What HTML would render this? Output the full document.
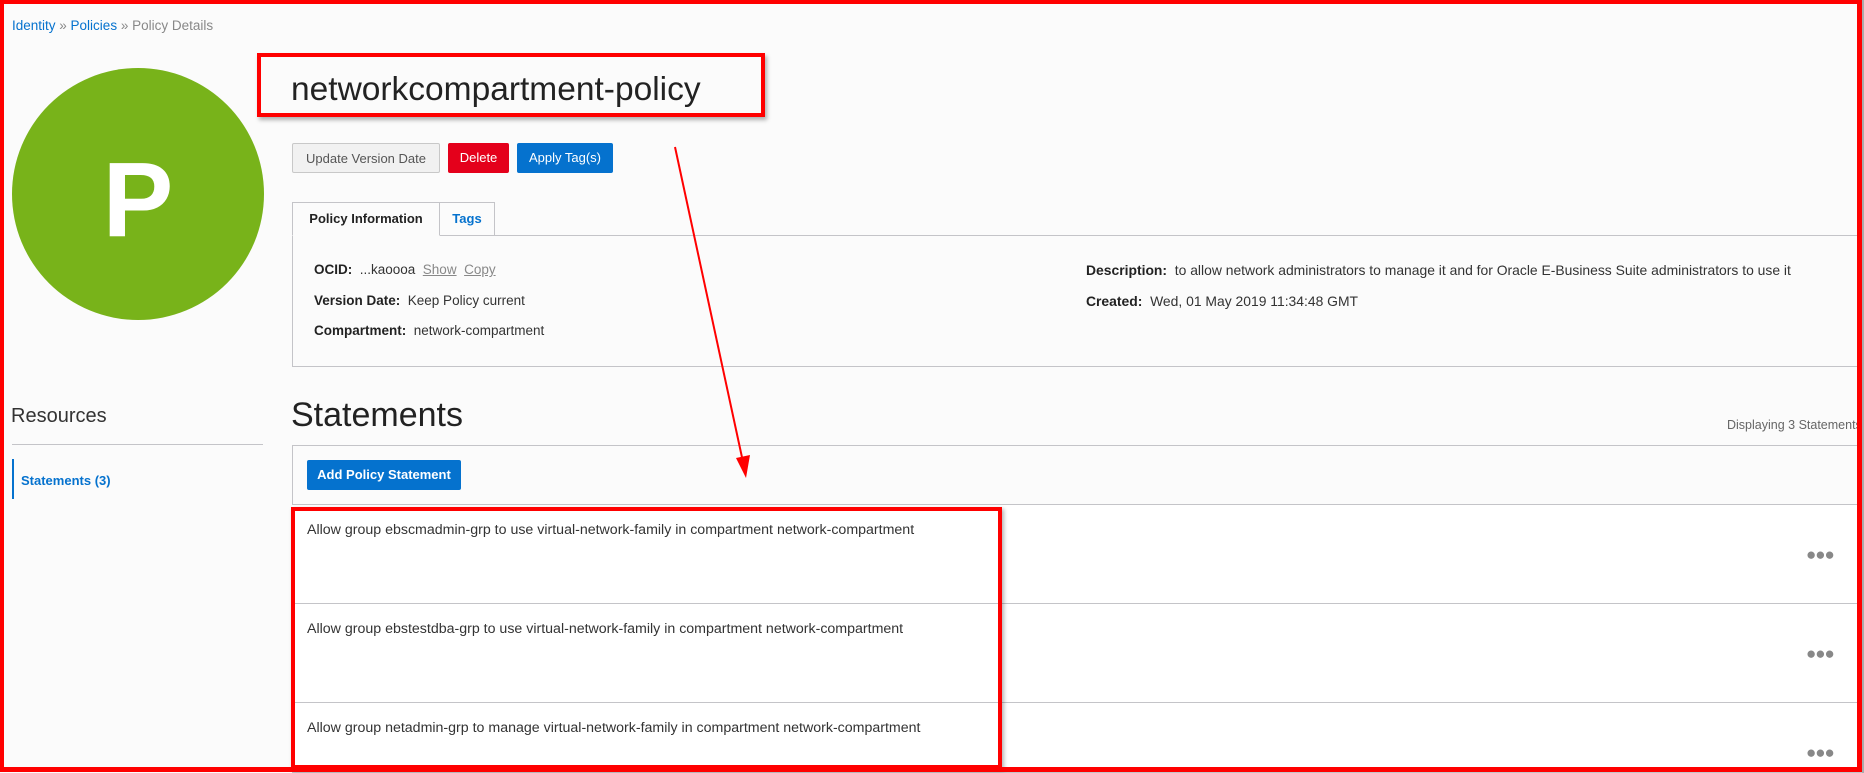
<!DOCTYPE html>
<html><head><meta charset="utf-8"><style>
*{margin:0;padding:0;box-sizing:border-box}
body{width:1864px;height:773px;background:#fbfbfb;font-family:"Liberation Sans",sans-serif;position:relative;overflow:hidden;color:#333}
.a{position:absolute;white-space:nowrap}
.btn{position:absolute;height:30px;line-height:30px;font-size:13px;border-radius:2px;text-align:center}
.lbl{font-weight:bold;color:#222}
.row{position:absolute;left:292px;width:1570px;background:#fff;border-bottom:1px solid #c4c4c8}
.dots{position:absolute;left:1806px;font-size:17px;color:#888;letter-spacing:-1px}
.st{font-size:14.2px}
</style></head><body>
<div class="a" style="left:12px;top:18px;font-size:13.5px;color:#888"><span style="color:#0572ce">Identity</span> » <span style="color:#0572ce">Policies</span> » Policy Details</div>
<div class="a" style="left:12px;top:68px;width:252px;height:252px;border-radius:50%;background:#78b31a"></div>
<div class="a" style="left:12px;top:135px;width:252px;text-align:center;font-size:106px;font-weight:bold;color:#fff;line-height:130px">P</div>
<div class="a" style="left:257px;top:53px;width:508px;height:64px;border:4px solid #f00;box-shadow:2px 3px 4px rgba(0,0,0,.3);background:#fbfbfb"></div>
<div class="a" style="left:291px;top:71px;font-size:33.5px;color:#222">networkcompartment-policy</div>
<div class="btn" style="left:292px;top:143px;width:148px;background:#f1f1f1;border:1px solid #c8c8c8;color:#555">Update Version Date</div>
<div class="btn" style="left:448px;top:143px;width:61px;background:#e4001b;color:#fff">Delete</div>
<div class="btn" style="left:517px;top:143px;width:96px;background:#0572ce;color:#fff">Apply Tag(s)</div>
<div class="a" style="left:292px;top:235px;width:1572px;height:132px;border:1px solid #c4c4c8;border-right:none"></div>
<div class="a" style="left:292px;top:202px;width:148px;height:34px;border:1px solid #c4c4c8;border-bottom:1px solid #fbfbfb;background:#fbfbfb;font-size:13px;font-weight:bold;line-height:32px;text-align:center;color:#222">Policy Information</div>
<div class="a" style="left:439px;top:202px;width:56px;height:33px;border:1px solid #c4c4c8;border-bottom:none;font-size:13px;font-weight:bold;line-height:32px;text-align:center;color:#0572ce">Tags</div>
<div class="a" style="left:314px;top:262px;font-size:13.5px"><span class="lbl">OCID:</span>&nbsp; ...kaoooa &nbsp;<u style="color:#888">Show</u>&nbsp; <u style="color:#888">Copy</u></div>
<div class="a" style="left:314px;top:293px;font-size:13.5px"><span class="lbl">Version Date:</span>&nbsp; Keep Policy current</div>
<div class="a" style="left:314px;top:323px;font-size:13.5px"><span class="lbl">Compartment:</span>&nbsp; network-compartment</div>
<div class="a" style="left:1086px;top:262px;font-size:13.9px"><span class="lbl">Description:</span>&nbsp; to allow network administrators to manage it and for Oracle E-Business Suite administrators to use it</div>
<div class="a" style="left:1086px;top:293px;font-size:13.9px"><span class="lbl">Created:</span>&nbsp; Wed, 01 May 2019 11:34:48 GMT</div>
<div class="a" style="left:11px;top:405px;font-size:20px;color:#333">Resources</div>
<div class="a" style="left:12px;top:444px;width:251px;height:1px;background:#c4c4c8"></div>
<div class="a" style="left:12px;top:459px;width:2px;height:40px;background:#0572ce"></div>
<div class="a" style="left:21px;top:473px;font-size:13px;font-weight:bold;color:#0572ce">Statements (3)</div>
<div class="a" style="left:291px;top:396px;font-size:34px;color:#222">Statements</div>
<div class="a" style="left:1727px;top:418px;font-size:12.5px;color:#666">Displaying 3 Statements</div>
<div class="a" style="left:292px;top:445px;width:1572px;height:60px;border-top:1px solid #c4c4c8;border-left:1px solid #c4c4c8;border-bottom:1px solid #c4c4c8"></div>
<div class="btn" style="left:307px;top:460px;width:154px;background:#0572ce;color:#fff;font-weight:bold">Add Policy Statement</div>
<div class="row" style="top:505px;height:99px"></div>
<div class="row" style="top:604px;height:99px"></div>
<div class="row" style="top:703px;height:70px"></div>
<div class="a st" style="left:307px;top:522px">Allow group ebscmadmin-grp to use virtual-network-family in compartment network-compartment</div>
<div class="a st" style="left:307px;top:621px">Allow group ebstestdba-grp to use virtual-network-family in compartment network-compartment</div>
<div class="a st" style="left:307px;top:720px">Allow group netadmin-grp to manage virtual-network-family in compartment network-compartment</div>
<div class="dots" style="top:545px">●●●</div>
<div class="dots" style="top:644px">●●●</div>
<div class="dots" style="top:743px">●●●</div>
<div class="a" style="left:291px;top:507px;width:711px;height:262px;border:4px solid #f00;box-shadow:2px 2px 4px rgba(0,0,0,.3)"></div>
<svg class="a" style="left:0;top:0" width="1864" height="773">
<line x1="675" y1="147" x2="743" y2="462" stroke="#f00" stroke-width="2"/>
<polygon points="746,478 736,458 750,455" fill="#f00"/>
</svg>
<div class="a" style="left:0;top:0;width:1862px;height:772px;border:4px solid #f00;border-right-width:5px;border-bottom-width:5px"></div>
<div class="a" style="left:1862px;top:0;width:2px;height:773px;background:#aaa"></div>
</body></html>
